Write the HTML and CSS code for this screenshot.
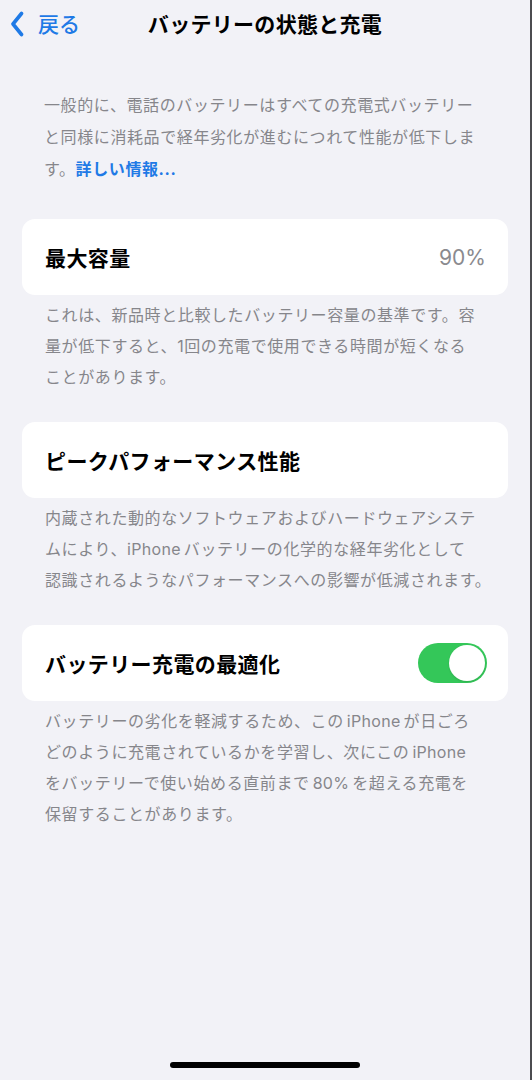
FILE: index.html
```html
<!DOCTYPE html>
<html lang="ja">
<head>
<meta charset="utf-8">
<title>バッテリーの状態と充電</title>
<link rel="stylesheet" href="styles.css">
</head>
<body>
<div class="page">
  <header class="nav">
    <a class="back" href="#">
      <svg class="chevron" width="14" height="26" viewBox="0 0 14 26" aria-hidden="true">
        <path d="M11.5 2.5 L3 13 L11.5 23.5" fill="none" stroke="currentColor" stroke-width="3.6" stroke-linecap="round" stroke-linejoin="round"/>
      </svg>
      <span>戻る</span>
    </a>
    <h1 class="title">バッテリーの状態と充電</h1>
    <span class="spacer"></span>
  </header>

  <p class="intro">一般的に、電話のバッテリーはすべての充電式バッテリー<br>と同様に消耗品で経年劣化が進むにつれて性能が低下しま<br>す。<a class="link" href="#">詳しい情報...</a></p>

  <section class="group group-first">
    <div class="card">
      <span class="label">最大容量</span>
      <span class="value">90%</span>
    </div>
    <p class="note">これは、新品時と比較したバッテリー容量の基準です。容<br>量が低下すると、1回の充電で使用できる時間が短くなる<br>ことがあります。</p>
  </section>

  <section class="group">
    <div class="card">
      <span class="label">ピークパフォーマンス性能</span>
    </div>
    <p class="note">内蔵された動的なソフトウェアおよびハードウェアシステ<br>ムにより、<span class="latin start">iPhone</span>バッテリーの化学的な経年劣化として<br>認識されるようなパフォーマンスへの影響が低減されます。</p>
  </section>

  <section class="group">
    <div class="card">
      <span class="label">バッテリー充電の最適化</span>
      <span class="switch is-on" role="switch" aria-checked="true"><span class="knob"></span></span>
    </div>
    <p class="note">バッテリーの劣化を軽減するため、この<span class="latin">iPhone</span>が日ごろ<br>どのように充電されているかを学習し、次にこの<span class="latin end">iPhone</span><br>をバッテリーで使い始める直前まで<span class="latin">80%</span>を超える充電を<br>保留することがあります。</p>
  </section>

  <div class="home-indicator"></div>
</div>
</body>
</html>
```

FILE: styles.css
```css
html, body {
  margin: 0;
  padding: 0;
}

body {
  background: #f2f2f7;
  font-family: "Inter", "Noto Sans CJK JP", sans-serif;
  color: #000;
}

.page {
  box-sizing: border-box;
  width: 532px;
  min-height: 1080px;
  display: flex;
  flex-direction: column;
  border-right: 2px solid #4c4c50;
}

/* navigation bar */
.nav {
  height: 48px;
  display: grid;
  grid-template-columns: 1fr auto 1fr;
  align-items: center;
}

.back {
  display: flex;
  align-items: center;
  gap: 14px;
  padding-left: 10px;
  color: #1f7ae6;
  text-decoration: none;
  font-size: 21px;
  font-weight: 500;
  line-height: 1;
}

.chevron {
  display: block;
}

.title {
  margin: 0;
  font-size: 21px;
  font-weight: 700;
  letter-spacing: 0.3px;
  line-height: 1;
}

/* text blocks */
.intro,
.note {
  margin: 0;
  font-size: 16px;
  color: #86868b;
  letter-spacing: 0.6px;
  white-space: nowrap;
}

.intro {
  padding: 41px 20px 0 44px;
  line-height: 32px;
}

.note {
  padding: 5px 0 0 23px;
  line-height: 31px;
}

.latin {
  margin: 0 3px;
  letter-spacing: 0.3px;
}

.latin.start {
  margin-left: 0;
}

.latin.end {
  margin-right: 0;
}

.link {
  color: #1f7ae6;
  font-weight: 700;
  text-decoration: none;
}

.group {
  margin: 29px 22px 0;
}

.group-first {
  margin-top: 34px;
}

.card {
  height: 76px;
  background: #fff;
  border-radius: 13px;
  display: flex;
  align-items: center;
  justify-content: space-between;
  padding: 0 21px 0 23px;
}

.label {
  font-size: 21px;
  font-weight: 700;
  letter-spacing: 0.4px;
}

.value {
  font-size: 21px;
  color: #8a8a8e;
  padding-right: 1px;
}

/* toggle */
.switch {
  width: 69px;
  height: 40px;
  border-radius: 20px;
  background: #34c759;
  display: flex;
  align-items: center;
  justify-content: flex-end;
  padding: 0 2px;
  box-sizing: border-box;
}

.knob {
  width: 36px;
  height: 36px;
  border-radius: 50%;
  background: #fff;
  box-shadow: 0 1px 2px rgba(0, 0, 0, 0.12);
}

.home-indicator {
  margin: auto auto 12px;
  width: 190px;
  height: 6px;
  border-radius: 3px;
  background: #000;
}
```
